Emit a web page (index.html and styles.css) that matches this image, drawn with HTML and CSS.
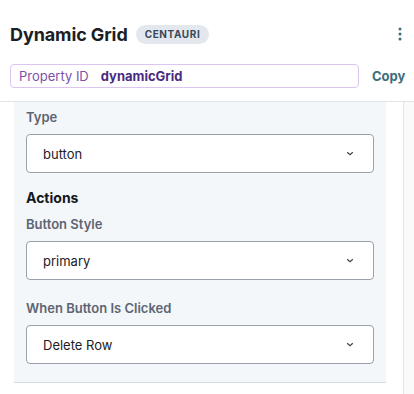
FILE: index.html
```html
<!DOCTYPE html>
<html>
<head>
<meta charset="utf-8">
<link rel="stylesheet" href="styles.css">
</head>
<body>
<header class="head">
  <div class="title-row">
    <h1 class="title">Dynamic Grid</h1>
    <span class="badge">CENTAURI</span>
    <button class="kebab" aria-label="More">
      <svg width="4" height="14" viewBox="0 0 4 14"><circle cx="2" cy="2" r="1.5"/><circle cx="2" cy="7" r="1.5"/><circle cx="2" cy="12" r="1.5"/></svg>
    </button>
  </div>
  <div class="prop-row">
    <div class="prop-box"><span class="prop-label">Property ID</span><span class="prop-value">dynamicGrid</span></div>
    <button class="copy">Copy</button>
  </div>
</header>
<main class="body">
  <section class="panel">
    <div class="field">
      <label class="label">Type</label>
      <div class="select"><span>button</span><svg class="chev" width="8" height="5" viewBox="0 0 8 5"><path d="M1.2 1.2l2.8 2.6 2.8-2.6"/></svg></div>
    </div>
    <h2 class="section">Actions</h2>
    <div class="field">
      <label class="label">Button Style</label>
      <div class="select"><span>primary</span><svg class="chev" width="8" height="5" viewBox="0 0 8 5"><path d="M1.2 1.2l2.8 2.6 2.8-2.6"/></svg></div>
    </div>
    <div class="field">
      <label class="label">When Button Is Clicked</label>
      <div class="select"><span>Delete Row</span><svg class="chev" width="8" height="5" viewBox="0 0 8 5"><path d="M1.2 1.2l2.8 2.6 2.8-2.6"/></svg></div>
    </div>
  </section>
  <div class="track"></div>
</main>
</body>
</html>
```
FILE: styles.css
```css
* { box-sizing: border-box; }
html, body { margin: 0; padding: 0; background: #fff; }
body { font-family: Inter, "Noto Sans", sans-serif; color: #1a1d23; width: 414px; height: 394px; overflow: hidden; }

.head { padding: 22px 0 0 10px; border-bottom: 1px solid #e1e5ea; height: 102px; }
.title-row { display: flex; align-items: center; height: 24px; }
.title { margin: 0; font-size: 18px; font-weight: 700; letter-spacing: -0.1px; color: #1b1e24; }
.badge { margin-left: 8px; height: 19px; padding: 0 9px; border-radius: 10px; background: #e3e8ef; color: #3a4758; font-size: 10px; font-weight: 700; letter-spacing: 0.6px; display: inline-flex; align-items: center; }
.kebab { margin-left: auto; margin-right: 12px; border: 0; background: none; padding: 0; display: flex; fill: #3c6e7c; }

.prop-row { display: flex; align-items: center; margin-top: 18px; }
.prop-box { width: 349px; height: 24px; border: 1px solid #dcc6ee; border-radius: 4px; display: flex; align-items: center; padding-left: 8px; font-size: 13px; }
.prop-label { color: #7b52ab; }
.prop-value { margin-left: 12px; color: #4b2a82; font-weight: 700; }
.copy { margin-left: 13px; border: 0; background: none; padding: 0; font-family: inherit; font-size: 13px; font-weight: 700; color: #3c6e7c; }

.body { display: flex; height: 292px; }
.panel { margin-left: 14px; width: 372px; height: 281px; background: #f4f7fa; border-bottom: 1px solid #d8dde4; padding: 6px 12px 0 12px; }
.track { margin-left: 17px; flex: 1; border-left: 1px solid #e6e6e6; background: #fafafa; }

.field { display: flex; flex-direction: column; }
.label { font-size: 13px; font-weight: 600; color: #5c6573; line-height: 18px; margin-bottom: 8px; }
.select { height: 39px; background: #fff; border: 1px solid #9aa1ab; border-radius: 4px; display: flex; align-items: center; padding: 0 19px 0 16px; font-size: 13px; color: #1d2025; }
.select span { flex: 1; }
.chev { fill: none; stroke: #444; stroke-width: 1.2; }
.section { margin: 16px 0 8px; font-size: 14px; font-weight: 700; color: #14171c; line-height: 18px; }
.field + .field { margin-top: 19px; }
```
